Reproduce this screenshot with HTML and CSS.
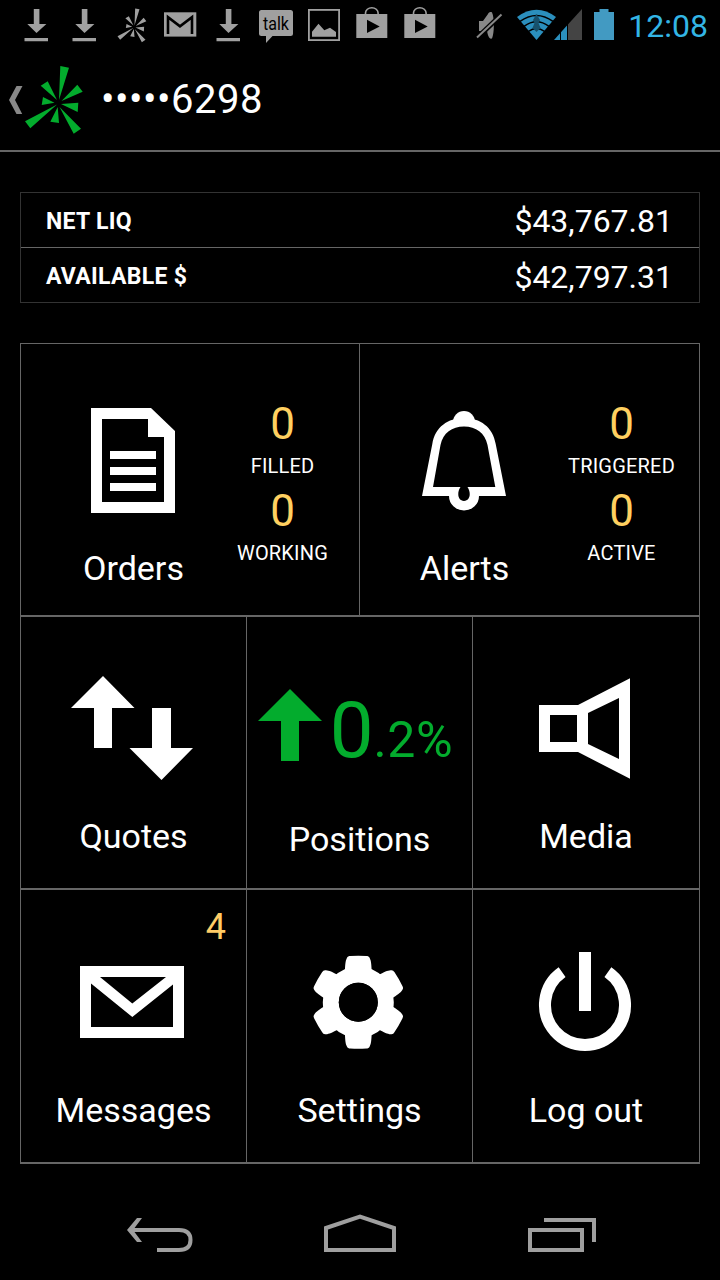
FILE: index.html
```html
<!DOCTYPE html>
<html lang="en">
	<head>
		<meta charset="UTF-8" />
		<meta name="viewport" content="width=device-width, initial-scale=1.0" />
		<title>Account</title>
		<link rel="stylesheet" href="styles.css">
	</head>
	<body>
		<!-- shared icons -->
		<svg class="symbols" width="0" height="0">
			<symbol id="download" viewBox="0 0 48 50">
				<path d="M21.8 9h5.6v15h7L24.5 33 15.3 24h6.5zM12.5 38h23.5v3.2H12.5z" />
			</symbol>
			<symbol id="bag" viewBox="0 0 48 50">
				<path d="M17.500 15v-2a6.300 5.300 0 0 1 12.600 0v2" fill="none" stroke="#a0a0a0" stroke-width="1.600" />
				<path fill-rule="evenodd" d="M8.300 14h31v24h-31zM19 19.700v13.300l12.700-6.600z" />
			</symbol>
			<symbol id="logo" viewBox="0 0 60 72">
				<path d="M36.300 2l8.700 1.700L35 36zM53.300 20.700l5.400 7L37.500 37zM54.300 38.700l-.6 9.300L37 40zM57 64.700l-7.300 5L35.500 43zM26.300 57.700l8.700 1.300L33.700 43zM1 57.300l5.300 7L33 40.500zM19 33l-1.300 8 12.800-2.300zM16.700 21.700l7-4.400L33 36z" />
			</symbol>
		</svg>

		<div class="status-bar">
			<div class="notifications">
				<svg class="status-icon"><use href="#download" /></svg>
				<svg class="status-icon"><use href="#download" /></svg>
				<svg class="status-icon" viewBox="0 0 48 50">
					<use href="#logo" x="9" y="7.500" width="30" height="36" />
				</svg>
				<svg class="status-icon" viewBox="0 0 48 50">
					<rect x="8" y="12.300" width="32.300" height="24.300" />
					<path d="M12 34V17.200L24 26.300l12-9.100V34" fill="none" stroke="#000" stroke-width="2.600" />
				</svg>
				<svg class="status-icon"><use href="#download" /></svg>
				<svg class="status-icon" viewBox="0 0 48 50">
					<path d="M9.500 10h29a2.500 2.500 0 0 1 2.500 2.500v21a2.500 2.500 0 0 1-2.500 2.500H20.500L14 43v-7H9.500a2.500 2.500 0 0 1-2.500-2.500v-21A2.500 2.500 0 0 1 9.500 10z" />
					<text class="talk" x="11" y="29.500" textLength="26" lengthAdjust="spacingAndGlyphs">talk</text>
				</svg>
				<svg class="status-icon" viewBox="0 0 48 50">
					<rect x="8.900" y="9.900" width="30.200" height="30.200" fill="none" stroke="#a0a0a0" stroke-width="1.800" />
					<path d="M12 36.700v-5l6.500-8 5.800 6.500 5.700-2.400 6 4.200v4.700z" />
				</svg>
				<svg class="status-icon"><use href="#bag" /></svg>
				<svg class="status-icon"><use href="#bag" /></svg>
			</div>
			<div class="system">
				<svg class="mute" width="28" height="50" viewBox="0 0 28 50">
					<path d="M4 21h4l5-7c1-2 3-2.500 4-1.500 2.500 5 2.500 20.500 0 26-3 1-4-3-5-7.500H4z" />
					<path d="M2 38L27 14" stroke="#000" stroke-width="5" />
					<path d="M2 37.500L26.500 14.500" stroke="#888" stroke-width="2" />
				</svg>
				<svg class="signal" width="66" height="50" viewBox="0 0 66 50">
					<path d="M0 17Q19.500 2.500 39 17L19.500 40z" fill="#2b8fbd" />
					<path d="M3 21.300Q19.500 9.500 36 21.300M7 26.300Q19.500 17 32 26.300M11.500 31.300Q19.500 25.500 27.500 31.300" fill="none" stroke="#000" stroke-width="1.500" />
					<path d="M19.500 14l3.500 6-1.500 3 2 5-4 4-4-4 2-5-1.500-3z" fill="#17516c" />
					<path d="M50 25.500L65 9v31H50z" fill="#444" />
					<path d="M37 40L50 25.500V40z" fill="#2b8fbd" />
					<path d="M43.500 30v10M50.500 22v18" stroke="#000" stroke-width="1" />
				</svg>
				<svg class="battery" width="20" height="50" viewBox="0 0 20 50">
					<path d="M5.500 9h9v3H20v28H0V12h5.500z" fill="#429ac2" />
				</svg>
				<span class="clock">12:08</span>
			</div>
		</div>

		<div class="header">
			<svg class="back" width="14" height="28" viewBox="0 0 14 28">
				<path d="M7.500 0h6L6 14l7.200 14H7.500L0 14z" fill="#888" />
			</svg>
			<svg class="logo" width="60" height="72"><use href="#logo" /></svg>
			<h1>•••••6298</h1>
		</div>

		<div class="balances">
			<div class="balance">
				<span class="name">NET LIQ</span>
				<span class="amount">$43,767.81</span>
			</div>
			<div class="balance">
				<span class="name">AVAILABLE $</span>
				<span class="amount">$42,797.31</span>
			</div>
		</div>

		<div class="menu">
			<div class="row row-two">
				<div class="tile">
					<div class="main main-orders">
						<svg class="icon" viewBox="0 0 129 128">
							<path fill-rule="evenodd" d="M22 12h60l24 23v82H22zM33 23v83h62V41H79V23z" />
							<path d="M41 55h46v8H41zM41 71h46v8H41zM41 87h46v8H41z" />
						</svg>
						<p>Orders</p>
					</div>
					<div class="counts">
						<span class="count">0</span>
						<span class="caption">FILLED</span>
						<span class="count">0</span>
						<span class="caption">WORKING</span>
					</div>
				</div>
				<div class="tile">
					<div class="main main-alerts">
						<svg class="icon" viewBox="0 0 129 128">
							<path d="M54 26a11 11 0 0 1 22 0z" />
							<path fill-rule="evenodd" d="M23 100l10.300-52C36 31 49 22 65 22s29 9 31.700 26L107 100H80a15 14.500 0 0 1-30 0zM34 91h27.500c-4 6-2.500 14 3.500 14s7.500-8 3.500-14H96.300L88.500 49C86 37 77 30.500 65 30.500S44 37 41.500 49z" />
						</svg>
						<p>Alerts</p>
					</div>
					<div class="counts">
						<span class="count">0</span>
						<span class="caption">TRIGGERED</span>
						<span class="count">0</span>
						<span class="caption">ACTIVE</span>
					</div>
				</div>
			</div>
			<div class="row">
				<div class="tile">
					<svg class="icon" viewBox="0 0 129 128">
						<path d="M34 11l31.500 32H43v40H25V43H2zM83 43h19v40h22l-31.500 32L60.500 83H83z" />
					</svg>
					<p>Quotes</p>
				</div>
				<div class="tile">
					<div class="change">
						<svg width="64" height="72" viewBox="0 0 64 72">
							<path d="M32 0l32 32H41v40H23V32H0z" />
						</svg>
						<span class="whole">0<span class="decimal">.2%</span></span>
					</div>
					<p>Positions</p>
				</div>
				<div class="tile">
					<svg class="icon" viewBox="0 0 129 128">
						<path fill-rule="evenodd" d="M18 40h39l52-26.700v100.500L57 87H18zM29 50v27h27V50zM67 48v31l31 15V33z" />
					</svg>
					<p>Media</p>
				</div>
			</div>
			<div class="row">
				<div class="tile">
					<svg class="icon" viewBox="0 0 129 128">
						<path fill-rule="evenodd" d="M11 28h104v72H11zM31 39l32.300 26.500L97 39zM22 45.500V89h82V46.500L63.300 79z" />
					</svg>
					<p>Messages</p>
					<span class="badge">4</span>
				</div>
				<div class="tile">
					<svg class="icon" viewBox="0 0 129 128">
						<defs>
							<path id="tooth" d="M-13.500-30C-13-38-13-41-11.500-44-10.700-46-9.500-46.200-8-46.300q8-.5 16 0C9.500-46.200 10.700-46 11.500-44 13-41 13-38 13.500-30z" />
						</defs>
						<g transform="translate(63.300 64.200)">
							<use href="#tooth" />
							<use href="#tooth" transform="rotate(60)" />
							<use href="#tooth" transform="rotate(120)" />
							<use href="#tooth" transform="rotate(180)" />
							<use href="#tooth" transform="rotate(240)" />
							<use href="#tooth" transform="rotate(300)" />
							<circle r="27.500" fill="none" stroke="#fff" stroke-width="16" />
							<circle r="19.500" fill="#000" />
						</g>
					</svg>
					<p>Settings</p>
				</div>
				<div class="tile">
					<svg class="icon" viewBox="0 0 129 128">
						<path d="M58 14h12v59H58z" />
						<path d="M41.100 34.100a40 40 0 1 0 45.800 0" fill="none" stroke="#fff" stroke-width="12" />
					</svg>
					<p>Log out</p>
				</div>
			</div>
		</div>

		<div class="nav-bar">
			<svg width="72" height="40" viewBox="0 0 72 40">
				<path d="M13 4h5L9 16l9 12h-5L3 16z" fill="#9f9f9f" />
				<path d="M7 16h48c8 0 11.500 4 11.500 10S63 36 55 36H33" />
			</svg>
			<svg width="72" height="40" viewBox="0 0 72 40">
				<path d="M2 14L36 2.500 70 14v22H2z" />
			</svg>
			<svg width="72" height="40" viewBox="0 0 72 40">
				<path d="M6 16h52v20H6zM20 6h50v22" />
			</svg>
		</div>
	</body>
</html>
```

FILE: styles.css
```css
* {
	margin: 0;
	padding: 0;
	box-sizing: border-box;
}
body {
	font-family: Roboto, "Liberation Sans", sans-serif;
	background-color: #000;
	color: #fff;
	width: 720px;
	height: 1280px;
	overflow: hidden;
}
svg {
	display: block;
	flex-shrink: 0;
}
.symbols {
	position: absolute;
}

/* Status bar */
.status-bar {
	display: flex;
	justify-content: space-between;
	height: 50px;
	padding: 0 12px 0 12px;
}
.notifications,
.system {
	display: flex;
}
.status-icon {
	width: 48px;
	height: 50px;
	fill: #a0a0a0;
}
.talk {
	font-size: 18px;
	fill: #000;
}
.mute {
	fill: #888;
	margin-right: 14px;
}
.signal {
	margin-right: 11px;
}
.battery {
	margin-right: 14px;
}
.clock {
	font-size: 32px;
	line-height: 52px;
	color: #33b5e5;
}

/* Header */
.header {
	display: flex;
	align-items: center;
	height: 102px;
	padding-left: 9px;
	border-bottom: 2px solid #666;
}
.logo {
	fill: #03ac2d;
	margin: 0 17px 0 1px;
}
.header h1 {
	font-size: 40px;
	font-weight: normal;
	letter-spacing: 0.5px;
	padding-bottom: 2px;
}

/* Balances */
.balances {
	margin: 40px 20px;
	border: 1px solid #333;
}
.balance {
	display: flex;
	justify-content: space-between;
	align-items: center;
	height: 54px;
	padding: 2px 26px 0 25px;
}
.balance + .balance {
	height: 55px;
	padding-top: 3px;
	border-top: 1px solid #666;
}
.name {
	font-size: 23px;
	font-weight: bold;
	letter-spacing: 0.3px;
}
.amount {
	font-size: 32px;
}

/* Menu */
.menu {
	margin: 0 20px;
	border: 1px solid #666;
	border-bottom-width: 2px;
}
.row {
	display: grid;
	grid-template-columns: 226px 226px 226px;
	height: 273px;
}
.row-two {
	grid-template-columns: 339px 339px;
	height: 271px;
}
.row + .row {
	border-top: 2px solid #666;
}
.row:last-child {
	height: 274px;
}
.tile {
	position: relative;
	display: flex;
	flex-direction: column;
	align-items: center;
	padding-top: 48px;
	border-right: 1px solid #666;
}
.tile:last-child {
	border-right: none;
}
.row-two .tile {
	flex-direction: row;
	align-items: flex-start;
	padding-top: 52px;
}
.icon {
	width: 129px;
	height: 128px;
	fill: #fff;
}
.tile:nth-child(3) .icon {
	margin-right: 2px;
}
.tile p {
	margin-top: 23px;
	font-size: 34px;
	line-height: 40px;
}
.row-two p,
.row:last-child p {
	margin-top: 24px;
}
.main {
	display: flex;
	flex-direction: column;
	align-items: center;
	width: 207px;
}
.main-orders {
	padding-left: 18px;
}
.main-alerts p {
	padding-left: 2px;
}
.counts {
	display: flex;
	flex-direction: column;
	align-items: center;
	width: 109px;
}
.count {
	font-size: 44px;
	line-height: 56px;
	color: #ffd060;
}
.caption {
	font-size: 20px;
	line-height: 29px;
	letter-spacing: 0.2px;
	padding-bottom: 2px;
}

.change {
	display: flex;
	height: 131px;
	padding-right: 8px;
	color: #03ac2d;
	fill: #03ac2d;
}
.change svg {
	margin: 24px 8px 0 0;
}
.whole {
	font-size: 78px;
	line-height: 132px;
}
.decimal {
	font-size: 50px;
	line-height: 1;
	letter-spacing: 0.6px;
}
.badge {
	position: absolute;
	top: 15px;
	right: 20px;
	font-size: 36px;
	line-height: 44px;
	color: #ffcc66;
}

/* Navigation bar */
.nav-bar {
	display: flex;
	justify-content: center;
	gap: 128px;
	padding-top: 50px;
	fill: none;
	stroke: #9f9f9f;
	stroke-width: 4;
}
.nav-bar path[fill] {
	stroke: none;
}
```
